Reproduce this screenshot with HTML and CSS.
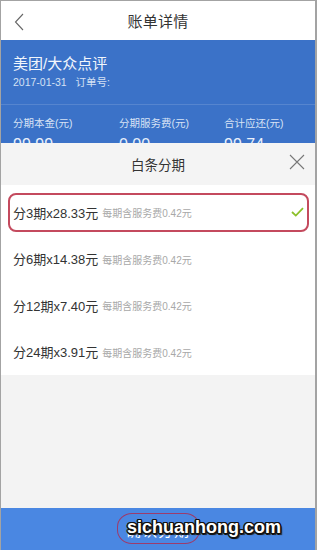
FILE: index.html
```html
<!DOCTYPE html>
<html lang="zh-CN">
<head>
<meta charset="utf-8">
<title>账单详情</title>
<link rel="stylesheet" href="styles.css">
</head>
<body>
<div class="phone">
  <header class="topbar">
    <svg class="back" width="10" height="18" viewBox="0 0 10 18"><path d="M9 1 L1.5 9 L9 17" fill="none" stroke="#666" stroke-width="1.1"/></svg>
    <div class="title">账单详情</div>
  </header>
  <section class="summary">
    <div class="merchant">美团/大众点评</div>
    <div class="meta">2017-01-31&nbsp;&nbsp;&nbsp;订单号:</div>
    <div class="divider"></div>
    <div class="stats">
      <div class="stat"><div class="label">分期本金(元)</div><div class="value">99.99</div></div>
      <div class="stat"><div class="label">分期服务费(元)</div><div class="value">0.00</div></div>
      <div class="stat"><div class="label">合计应还(元)</div><div class="value">99.74</div></div>
    </div>
  </section>
  <section class="sheet">
    <div class="sheet-head">
      <div class="sheet-title">白条分期</div>
      <svg class="close" width="16" height="16" viewBox="0 0 16 16"><path d="M1 1 L15 15 M15 1 L1 15" stroke="#777" stroke-width="1.1"/></svg>
    </div>
    <div class="options">
      <div class="opt"><div class="opt-inner selected"><span class="main">分3期x28.33元</span><span class="sub">每期含服务费0.42元</span>
        <svg class="check" width="13" height="10" viewBox="0 0 13 10"><path d="M1 5 L4.8 8.6 L12 1.2" fill="none" stroke="#8cc02a" stroke-width="1.8"/></svg></div></div>
      <div class="opt"><div class="opt-inner"><span class="main">分6期x14.38元</span><span class="sub">每期含服务费0.42元</span></div></div>
      <div class="opt"><div class="opt-inner"><span class="main">分12期x7.40元</span><span class="sub">每期含服务费0.42元</span></div></div>
      <div class="opt"><div class="opt-inner"><span class="main">分24期x3.91元</span><span class="sub">每期含服务费0.42元</span></div></div>
    </div>
    <div class="spacer"></div>
    <div class="confirm">
      <span class="confirm-text">确认分期</span>
      <span class="ring"></span>
      <span class="watermark">sichuanhong.com</span>
    </div>
  </section>
</div>
</body>
</html>
```

FILE: styles.css
```css
html, body {
  margin: 0;
  padding: 0;
  background: #ffffff;
}
body {
  font-family: "Liberation Sans", "Noto Sans CJK SC", sans-serif;
}
.phone {
  width: 317px;
  height: 550px;
  box-sizing: border-box;
  border-left: 1px solid #a3a3a3;
  border-right: 2px solid #a3a3a3;
  border-top: 1px solid #a3a3a3;
  display: flex;
  flex-direction: column;
  overflow: hidden;
}
.topbar {
  height: 39px;
  flex: none;
  display: flex;
  align-items: center;
  justify-content: center;
  position: relative;
  background: #fff;
}
.back {
  position: absolute;
  left: 13px;
  top: 12px;
}
.title {
  font-size: 15px;
  color: #333;
  letter-spacing: 0.3px;
}
.summary {
  height: 103px;
  flex: none;
  background: #3b72c8;
  overflow: hidden;
  color: #fff;
  padding-top: 14px;
  box-sizing: border-box;
}
.merchant {
  padding-left: 12px;
  font-size: 15px;
  line-height: 20px;
  color: #f2f6fc;
}
.meta {
  padding-left: 12px;
  font-size: 10.5px;
  line-height: 16px;
  color: #d5e1f4;
}
.divider {
  margin-top: 14px;
  height: 1px;
  background: rgba(255, 255, 255, 0.14);
}
.stats {
  display: grid;
  grid-template-columns: 106px 105px 1fr;
  padding-left: 12px;
  padding-top: 10px;
}
.label {
  font-size: 10.5px;
  line-height: 16px;
  color: #d8e3f5;
}
.value {
  margin-top: 4px;
  font-size: 16px;
  line-height: 20px;
  color: #e9f0fb;
}
.sheet {
  flex: 1;
  display: flex;
  flex-direction: column;
  background: #f3f3f3;
}
.sheet-head {
  height: 42px;
  flex: none;
  display: flex;
  align-items: center;
  justify-content: center;
  position: relative;
  background: #f4f4f4;
}
.sheet-title {
  font-size: 13.5px;
  color: #333;
}
.close {
  position: absolute;
  right: 10px;
  top: 11px;
}
.options {
  background: #fff;
  padding-top: 4px;
  flex: none;
}
.opt {
  height: 46.5px;
  display: flex;
  align-items: center;
}
.opt-inner {
  flex: 1;
  height: 39px;
  margin: 0 6px 0 7px;
  box-sizing: border-box;
  border: 2px solid transparent;
  border-radius: 8px;
  display: flex;
  align-items: center;
  padding: 0 3px 0 3px;
}
.opt-inner.selected {
  border-color: #c44a5e;
}
.main {
  font-size: 13px;
  color: #333;
}
.sub {
  margin-left: 4px;
  font-size: 10px;
  color: #a8a8a8;
  margin-top: 1px;
}
.check {
  margin-left: auto;
}
.spacer {
  flex: 1;
  background: #f3f3f3;
}
.confirm {
  height: 42px;
  flex: none;
  background: #4a87e2;
  display: flex;
  align-items: center;
  justify-content: center;
  position: relative;
}
.confirm-text {
  font-size: 15px;
  color: #fff;
  letter-spacing: 1px;
}
.ring {
  position: absolute;
  left: 116px;
  top: 5px;
  width: 83px;
  height: 31px;
  box-sizing: border-box;
  border: 1.5px solid #9c3b6c;
  border-radius: 15px / 14px;
}
.watermark {
  position: absolute;
  left: 126px;
  top: 9px;
  font-family: "Liberation Sans", sans-serif;
  font-weight: bold;
  font-size: 18px;
  color: #fff;
  text-shadow: 1.5px 0 0 #111, -1.5px 0 0 #111, 0 1.5px 0 #111, 0 -1.5px 0 #111, 1px 1px 0 #111, -1px -1px 0 #111, 1px -1px 0 #111, -1px 1px 0 #111, 2px 2px 1px #222;
}
```
